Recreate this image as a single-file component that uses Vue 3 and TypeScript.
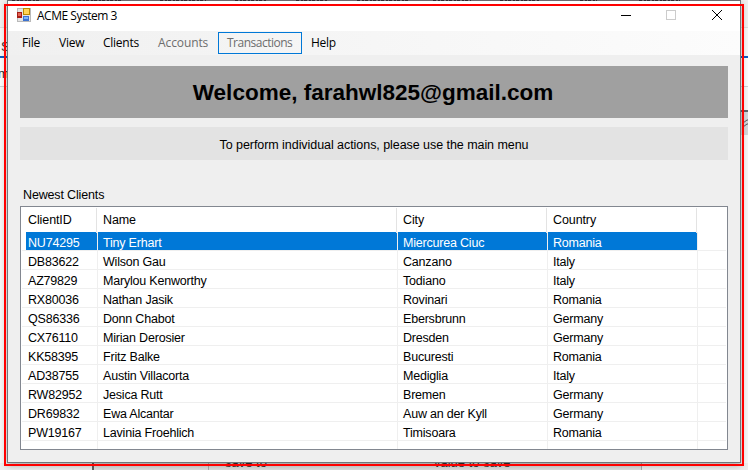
<script setup lang="ts">
interface MenuItem { label: string; key: string; disabled?: boolean }
const menu: MenuItem[] = [
  { label: 'File', key: 'file' },
  { label: 'View', key: 'view' },
  { label: 'Clients', key: 'clients' },
  { label: 'Accounts', key: 'accounts', disabled: true },
  { label: 'Transactions', key: 'transactions', disabled: true },
  { label: 'Help', key: 'help' },
]
const columns: string[] = ['ClientID', 'Name', 'City', 'Country', '']
const clients: string[][] = [
  ['NU74295', 'Tiny Erhart', 'Miercurea Ciuc', 'Romania'],
  ['DB83622', 'Wilson Gau', 'Canzano', 'Italy'],
  ['AZ79829', 'Marylou Kenworthy', 'Todiano', 'Italy'],
  ['RX80036', 'Nathan Jasik', 'Rovinari', 'Romania'],
  ['QS86336', 'Donn Chabot', 'Ebersbrunn', 'Germany'],
  ['CX76110', 'Mirian Derosier', 'Dresden', 'Germany'],
  ['KK58395', 'Fritz Balke', 'Bucuresti', 'Romania'],
  ['AD38755', 'Austin Villacorta', 'Mediglia', 'Italy'],
  ['RW82952', 'Jesica Rutt', 'Bremen', 'Germany'],
  ['DR69832', 'Ewa Alcantar', 'Auw an der Kyll', 'Germany'],
  ['PW19167', 'Lavinia Froehlich', 'Timisoara', 'Romania'],
]
</script>

<template>
  <div class="desktop">
    <svg class="backdrop" width="748" height="470" viewBox="0 0 748 470" shape-rendering="crispEdges">
      <rect width="748" height="470" fill="#f7f7f7" />
      <rect width="748" height="27" fill="#f0f0f0" />
      <rect x="7" width="734" height="1" fill="#77747a" />
      <path class="fragments" d="M12 .5H40M78 .5H122M160 .5H206M235 .5H267M296 .5H328M357 .5H409M433 .5H471M500 .5H540M580 .5H597M639 .5H680" />
      <rect y="27" width="748" height="1" fill="#dddddd" />
      <rect y="56" width="748" height="2" fill="#0b5cc5" />
      <rect y="58" width="748" height="28" fill="#fcfcfc" />
      <rect y="86" width="748" height="1" fill="#cccfd3" />
      <rect x="740" y="110" width="8" height="2" fill="#60646a" />
      <rect x="740" y="112" width="8" height="23" fill="#d5d7da" />
      <path d="M743 123l4-3h2M743 127l4-3h2" fill="none" stroke="#55585d" shape-rendering="auto" />
      <rect y="463" width="748" height="7" fill="#dedede" />
      <rect width="92" y="463" height="7" fill="#eeeeee" />
      <rect x="642" width="106" y="463" height="7" fill="#eeeeee" />
      <rect x="92" y="463" width="2" height="7" fill="#606060" />
      <rect x="208" y="463" width="1" height="7" fill="#aaa" />
      <rect x="641" y="463" width="1" height="7" fill="#aaa" />
      <text x="225" y="467" class="back-text">save to</text>
      <text x="434" y="467" class="back-text">value to save</text>
      <text x="1" y="51" class="back-text">S</text>
      <text x="-2" y="78" class="back-text">m</text>
    </svg>

    <main class="window">
      <header class="titlebar">
        <svg class="app-icon" width="14" height="14" viewBox="0 0 14 14" shape-rendering="crispEdges">
          <rect width="14" height="14" fill="#b9b9b9" /><rect x="1" y="1" width="12" height="12" fill="#e5e5e5" />
          <rect x="6" width="7" height="7" fill="#bc8900" /><rect x="7" y="1" width="5" height="5" fill="#ffd556" />
          <rect y="4" width="5" height="6" fill="#a61d16" /><rect x="1" y="5" width="3" height="3" fill="#e46353" />
          <rect x="6" y="8" width="6" height="5" fill="#3d73d0" /><rect x="7" y="9" width="4" height="2" fill="#78b5ff" />
        </svg>
        <span class="title">ACME System 3</span>
        <svg class="controls" width="110" height="12" viewBox="0 0 110 12" fill="none">
          <path d="M5 6.500h10" stroke="#000" />
          <rect x="50.500" y="1.500" width="9" height="9" stroke="#ccc" />
          <path d="M96 1l10 10M106 1L96 11" stroke="#000" stroke-width="1" />
        </svg>
      </header>
      <nav class="menu">
        <span v-for="item in menu" :key="item.key" :class="['item', item.key, { disabled: item.disabled }]">{{ item.label }}</span>
      </nav>
      <h1 class="welcome"><span>Welcome, farahwl825@gmail.com</span></h1>
      <p class="hint"><span>To perform individual actions, please use the main menu</span></p>
      <h2 class="caption">Newest Clients</h2>
      <section class="list">
        <div class="row head">
          <span v-for="(column, i) in columns" :key="i" class="cell">{{ column }}</span>
        </div>
        <div v-for="(client, i) in clients" :key="client[0]" :class="['row', { selected: i === 0 }]">
          <span v-for="(value, j) in client" :key="j" class="cell">{{ value }}</span>
          <span class="cell"></span>
        </div>
        <div class="row rest"><span v-for="n in 5" :key="n" class="cell"></span></div>
      </section>
    </main>
    <div class="outline"></div>
  </div>
</template>

<style>
body { margin: 0; overflow: hidden; }
</style>
<style scoped>
.desktop { position: relative; width: 748px; height: 470px; overflow: hidden; box-sizing: border-box; padding: 1px 7px 7px; font-family: "Liberation Sans", Arial, sans-serif; color: #000; }
.backdrop { position: absolute; left: 0; top: 0; }
.fragments { stroke: #353039; stroke-dasharray: 3 2 2 1; }
.back-text { font: 13px "Liberation Sans", sans-serif; fill: #333; }
.window { position: relative; width: 734px; height: 462px; box-sizing: border-box; border: 1px solid #70767a; border-top: 0; background: #efefef; box-shadow: 0 2px 7px #0005; }
.titlebar { height: 30px; background: #fff; display: flex; align-items: flex-start; box-sizing: border-box; padding: 7px 14px 0 9px; font: 12px/15px "Open Sans", sans-serif; }
.title { margin-left: 6px; letter-spacing: -.48px; }
.controls { margin-left: auto; margin-top: 1px; }
.menu { height: 24px; box-sizing: border-box; padding: 1px 0 0 4px; display: flex; background: linear-gradient(90deg, #f0f0f0, #fcfcfc); font: 12px/22px "Open Sans", sans-serif; letter-spacing: -.25px; }
.item { height: 22px; padding-left: 10px; box-sizing: border-box; border: 0 solid transparent; }
.file { width: 37px; }
.view { width: 44px; }
.clients { width: 55px; }
.accounts { width: 70px; letter-spacing: -.1px; }
.menu .transactions { width: 84px; border: 1px solid #0078d7; padding-left: 8px; line-height: 20px; letter-spacing: -.5px; }
.help { padding-left: 9px; }
.disabled { color: #6d6d6d; }
.welcome, .hint { display: flex; justify-content: center; align-items: center; margin: 0 12px; width: 708px; }
.welcome { margin-top: 11px; height: 52px; padding: 2px 2px 0 0; box-sizing: border-box; background: #a0a0a0; font-size: 22.500px; line-height: 28px; }
.hint { margin-top: 9px; height: 33px; padding-top: 3px; box-sizing: border-box; background: #e3e3e3; font-size: 12.500px; letter-spacing: -.055px; }
.caption { margin: 27px 0 3px 15px; font-size: 12.500px; line-height: 16px; font-weight: 400; letter-spacing: -.15px; }
.list { margin-left: 12px; width: 708px; height: 244px; box-sizing: border-box; border: 1px solid #828790; padding: 1px; background: #fff; overflow: hidden; font-size: 12.500px; letter-spacing: -.2px; }
.row { height: 19px; display: grid; grid-template-columns: 76px 300px 150px 150px 28px; line-height: 22px; box-sizing: border-box; border-bottom: 1px solid #efefef; }
.cell { box-sizing: border-box; border-right: 1px solid #efefef; padding-left: 5px; white-space: nowrap; }
.cell:first-child { padding-left: 6px; }
.cell:last-child { border-right: 0; }
.head { height: 24px; border: 0; line-height: 25px; grid-template-columns: 75px 300px 150px 150px 29px; letter-spacing: -.1px; }
.head .cell { border-color: #e3e3e3; padding-left: 6px; }
.selected { color: #fff; background: linear-gradient(90deg, #fff 4px, #0078d7 4px, #0078d7 675px, #fff 675px); }
.rest { height: 8px; border: 0; }
.outline { position: absolute; left: 4px; top: 4px; width: 740px; height: 462px; box-sizing: border-box; border: 2px solid #f00; }
</style>
